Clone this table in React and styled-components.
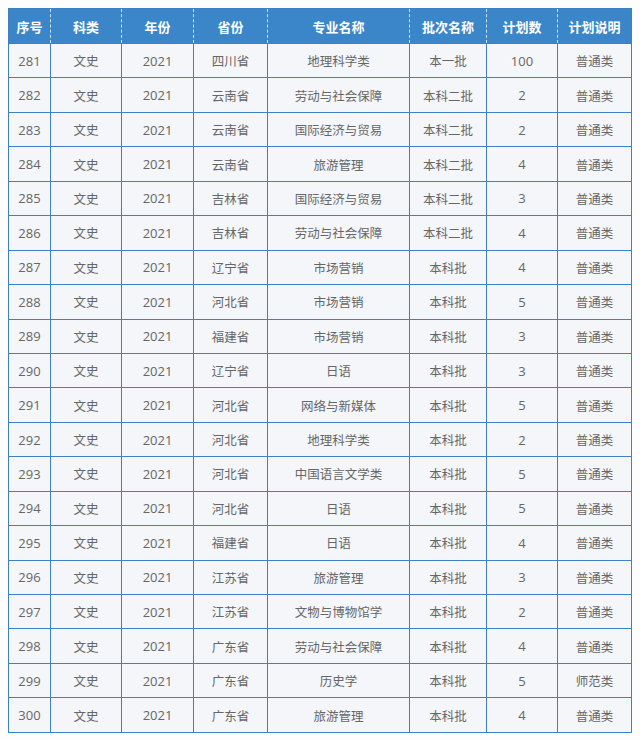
import React from "react";
import styled, { createGlobalStyle } from "styled-components";

const Global = createGlobalStyle`
  html, body { margin: 0; padding: 0; background: #fdfdfe; }
  body { font-family: "Noto Sans CJK SC", "Liberation Sans", sans-serif; }
`;

const Page = styled.div`
  padding: 8px 9px 7px 8px;
`;

const Table = styled.table`
  width: 623px;
  border-collapse: collapse;
  table-layout: fixed;
  background: #f4f6fa;
  border: 1px solid #3f80c2;
`;

const Th = styled.th`
  height: 34px;
  padding: 0;
  background: #3a86c9;
  color: #ffffff;
  font-family: "Noto Sans CJK SC", sans-serif;
  font-weight: 700;
  font-size: 13px;
  text-align: center;
  border-left: 1px dashed #cfe3f5;
  &:first-child { border-left: none; }
`;

const Tr = styled.tr`
  height: 34.45px;
`;

const Td = styled.td`
  padding: 0;
  text-align: center;
  color: #666666;
  font-size: ${(p) => (p.$num ? "13px" : "12.5px")};
  font-family: ${(p) => (p.$num ? '"Open Sans", "Liberation Sans", sans-serif' : '"Noto Sans CJK SC", sans-serif')};
  border: 1px solid #3f80c2;
`;

const widths = [42, 71, 72, 74, 142, 77, 71, 74];
const headers = ["序号", "科类", "年份", "省份", "专业名称", "批次名称", "计划数", "计划说明"];

const rows = [
  ["281", "四川省", "地理科学类", "本一批", "100", "普通类"],
  ["282", "云南省", "劳动与社会保障", "本科二批", "2", "普通类"],
  ["283", "云南省", "国际经济与贸易", "本科二批", "2", "普通类"],
  ["284", "云南省", "旅游管理", "本科二批", "4", "普通类"],
  ["285", "吉林省", "国际经济与贸易", "本科二批", "3", "普通类"],
  ["286", "吉林省", "劳动与社会保障", "本科二批", "4", "普通类"],
  ["287", "辽宁省", "市场营销", "本科批", "4", "普通类"],
  ["288", "河北省", "市场营销", "本科批", "5", "普通类"],
  ["289", "福建省", "市场营销", "本科批", "3", "普通类"],
  ["290", "辽宁省", "日语", "本科批", "3", "普通类"],
  ["291", "河北省", "网络与新媒体", "本科批", "5", "普通类"],
  ["292", "河北省", "地理科学类", "本科批", "2", "普通类"],
  ["293", "河北省", "中国语言文学类", "本科批", "5", "普通类"],
  ["294", "河北省", "日语", "本科批", "5", "普通类"],
  ["295", "福建省", "日语", "本科批", "4", "普通类"],
  ["296", "江苏省", "旅游管理", "本科批", "3", "普通类"],
  ["297", "江苏省", "文物与博物馆学", "本科批", "2", "普通类"],
  ["298", "广东省", "劳动与社会保障", "本科批", "4", "普通类"],
  ["299", "广东省", "历史学", "本科批", "5", "师范类"],
  ["300", "广东省", "旅游管理", "本科批", "4", "普通类"],
];

export default function App() {
  return (
    <Page>
      <Global />
      <Table>
        <colgroup>
          {widths.map((w, i) => (
            <col key={i} style={{ width: w }} />
          ))}
        </colgroup>
        <thead>
          <tr>
            {headers.map((h) => (
              <Th key={h}>{h}</Th>
            ))}
          </tr>
        </thead>
        <tbody>
          {rows.map(([no, prov, major, batch, count, note]) => (
            <Tr key={no}>
              <Td $num>{no}</Td>
              <Td>文史</Td>
              <Td $num>2021</Td>
              <Td>{prov}</Td>
              <Td>{major}</Td>
              <Td>{batch}</Td>
              <Td $num>{count}</Td>
              <Td>{note}</Td>
            </Tr>
          ))}
        </tbody>
      </Table>
    </Page>
  );
}
